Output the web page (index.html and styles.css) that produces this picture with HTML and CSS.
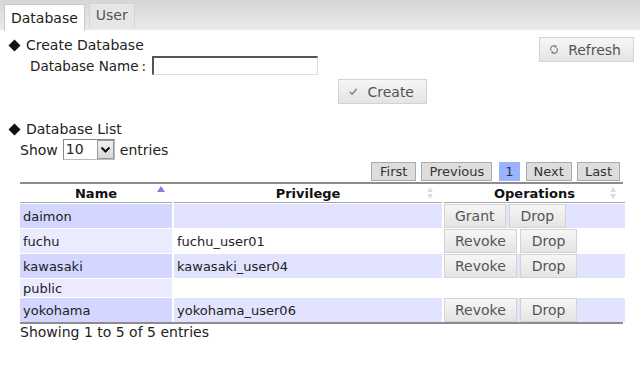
FILE: index.html
```html
<!DOCTYPE html>
<html>
<head>
<meta charset="utf-8">
<link rel="stylesheet" href="styles.css">
</head>
<body>
<div class="tabbar">
  <div class="tab active">Database</div>
  <div class="tab">User</div>
</div>
<div class="content">
  <div class="top">
    <div class="create">
      <div class="heading"><svg class="diamond" width="13" height="13" viewBox="0 0 13 13"><polygon points="6.5,0.5 12.5,6.5 6.5,12.5 0.5,6.5" fill="#111"/></svg>Create Database</div>
      <div class="namerow"><span class="label">Database Name</span><span class="colon">:</span><span class="input"></span></div>
      <div class="createrow"><span class="btn big create-btn"><svg class="ico" width="11" height="9" viewBox="0 0 11 9"><path d="M1 5 L4 8 L10 1" fill="none" stroke="#888" stroke-width="2"/></svg>Create</span></div>
    </div>
    <span class="btn big refresh"><svg class="ico" width="10" height="11" viewBox="0 0 10 11"><path d="M7.5 2.2 A3.6 3.6 0 0 0 1.8 7.2" fill="none" stroke="#888" stroke-width="1.6"/><path d="M2.5 8.8 A3.6 3.6 0 0 0 8.2 3.8" fill="none" stroke="#888" stroke-width="1.6"/><polygon points="5.5,0 9,1.5 6,4" fill="#888"/><polygon points="4.5,11 1,9.5 4,7" fill="#888"/></svg>Refresh</span>
  </div>
  <div class="heading list"><svg class="diamond" width="13" height="13" viewBox="0 0 13 13"><polygon points="6.5,0.5 12.5,6.5 6.5,12.5 0.5,6.5" fill="#111"/></svg>Database List</div>
  <div class="inner">
    <div class="showrow">Show <span class="select"><span class="val">10</span><span class="arrow"><svg width="11" height="8" viewBox="0 0 11 8"><path d="M1.5 1.5 L5.5 5.5 L9.5 1.5" fill="none" stroke="#111" stroke-width="2"/></svg></span></span> entries</div>
    <div class="pager">
      <span class="pbtn first">First</span><span class="pbtn">Previous</span><span class="pbtn cur">1</span><span class="pbtn">Next</span><span class="pbtn">Last</span>
    </div>
    <div class="tablewrap">
      <table class="dt">
        <colgroup><col class="c1"><col class="c2"><col class="c3"></colgroup>
        <thead>
          <tr>
            <th class="sorted">Name<span class="sort asc"></span></th>
            <th>Privilege<span class="sort both"></span></th>
            <th>Operations<span class="sort both"></span></th>
          </tr>
        </thead>
        <tbody>
          <tr class="odd"><td class="s1">daimon</td><td></td><td class="ops"><span class="btn">Grant</span><span class="btn drop">Drop</span></td></tr>
          <tr class="even"><td class="s1">fuchu</td><td>fuchu_user01</td><td class="ops"><span class="btn">Revoke</span><span class="btn drop">Drop</span></td></tr>
          <tr class="odd"><td class="s1">kawasaki</td><td>kawasaki_user04</td><td class="ops"><span class="btn">Revoke</span><span class="btn drop">Drop</span></td></tr>
          <tr class="even short"><td class="s1">public</td><td></td><td></td></tr>
          <tr class="odd"><td class="s1">yokohama</td><td>yokohama_user06</td><td class="ops"><span class="btn">Revoke</span><span class="btn drop">Drop</span></td></tr>
        </tbody>
      </table>
    </div>
    <div class="info">Showing 1 to 5 of 5 entries</div>
  </div>
</div>
</body>
</html>
```
FILE: styles.css
```css
* { box-sizing: border-box; }
body {
  margin: 0;
  font-family: "DejaVu Sans", Verdana, sans-serif;
  font-size: 14px;
  color: #222;
  background: #fff;
}
.tabbar {
  height: 31px;
  background: linear-gradient(#d6d6d6, #ebebeb);
  display: flex;
  align-items: flex-end;
  padding-left: 4px;
  gap: 4px;
  border-bottom: 1px solid #fff;
}
.tab {
  height: 25px;
  line-height: 23px;
  padding: 0 6px;
  background: #e6e6e6;
  border: 1px solid #d3d3d3;
  border-bottom: none;
  color: #555;
  margin-bottom: 2px;
}
.tab.active {
  height: 27px;
  padding: 0 6px;
  background: #fff;
  border-color: #c8c8c8;
  color: #212121;
  margin-bottom: -1px;
  line-height: 26px;
}
.content { padding: 0 8px; }
.top { display: flex; justify-content: space-between; align-items: flex-start; }
.heading {
  display: flex;
  align-items: center;
  height: 17px;
  line-height: 17px;
  margin-top: 6px;
}
.diamond { margin-right: 5px; }
.namerow {
  display: flex;
  align-items: center;
  margin-top: 2px;
  padding-left: 22px;
  height: 19px;
  font-size: 13.5px;
}
.colon { margin-left: 3px; margin-right: 6px; }
.input {
  width: 166px;
  height: 19px;
  border: 1px solid #ddd;
  border-top: 2px solid #555;
  border-left: 2px solid #555;
  background: #fff;
}
.createrow { margin-top: 4px; padding-left: 330px; }
.btn {
  display: inline-flex;
  align-items: center;
  justify-content: center;
  height: 24px;
  padding: 0 10px;
  border: 1px solid #d3d3d3;
  background: linear-gradient(#f6f6f6, #e4e4e4);
  color: #555;
  line-height: 16px;
}
.btn.drop { padding: 0 11px; }
.btn.big { height: 25px; padding: 0 12px 0 10px; }
.btn .ico { margin-right: 10px; }
.create-btn { width: 89px; }
.refresh { width: 95px; margin-top: 6px; margin-right: -2px; }
.heading.list { margin-top: 17px; }
.inner { padding-left: 12px; width: 615px; }
.showrow {
  display: flex;
  align-items: center;
  margin-top: 1px;
  height: 21px;
}
.select {
  display: inline-flex;
  width: 52px;
  height: 21px;
  margin: 0 5px 0 5px;
  border: 1px solid #888;
  border-right-color: #bbb;
  border-bottom-color: #bbb;
  background: #fff;
}
.select .val { flex: 1; padding-left: 2px; line-height: 19px; }
.select .arrow {
  width: 17px;
  border: 1px solid #999;
  background: linear-gradient(#f0f0f0, #d8d8d8);
  display: flex;
  align-items: center;
  justify-content: center;
}
.pager {
  display: flex;
  justify-content: flex-end;
  margin-top: 2px;
  padding-right: 3px;
  height: 19px;
  font-size: 13px;
}
.pbtn {
  height: 19px;
  line-height: 17px;
  padding: 0 7px;
  margin-left: 5px;
  border: 1px solid #aaa;
  background: #ddd;
  color: #333;
}
.pbtn.first { padding: 0 8px; }
.pbtn.cur {
  background: #99b3ff;
  border-color: #99b3ff;
  padding: 0 5px;
  margin-left: 7px;
  margin-right: 1px;
}
.tablewrap {
  margin-top: 1px;
  border-top: 2px solid #8c8c8c;
  border-bottom: 2px solid #8c8c8c;
  width: 603px;
}
.dt {
  border-collapse: separate;
  border-spacing: 2px 1px;
  margin: -1px -2px;
  width: 607px;
  table-layout: fixed;
  font-size: 13px;
}
.c1 { width: 152px; }
.c2 { width: 268px; }
.c3 { width: 181px; }
.dt th {
  position: relative;
  height: 19px;
  padding: 0;
  font-weight: bold;
  text-align: center;
  border-bottom: 1px solid #a8a8a8;
  line-height: 17px;
  color: #111;
}
.sort { position: absolute; top: 2px; right: 8px; width: 7px; height: 14px; }
.sort.asc::before {
  content: ""; position: absolute; top: 0; left: 0;
  border-left: 4px solid transparent; border-right: 4px solid transparent;
  border-bottom: 6px solid #7b82d8;
}
.sort.both::before, .sort.both::after {
  content: ""; position: absolute; left: 0;
  border-left: 3.5px solid transparent; border-right: 3.5px solid transparent;
}
.sort.both::before { top: 1px; border-bottom: 5px solid #ddd; }
.sort.both::after { top: 8px; border-top: 5px solid #ddd; }
.dt td {
  height: 24px;
  padding: 0 0 0 3px;
  line-height: 17px;
  white-space: nowrap;
}
.dt tr.short td { height: 18px; }
.dt tr.odd td { background: #e2e4ff; }
.dt tr.odd td.s1 { background: #d3d6ff; }
.dt tr.even td { background: #fff; }
.dt tr.even td.s1 { background: #eaebff; }
.dt td.ops { padding: 0; font-size: 14px; }
.dt td.ops .btn { margin-right: 3px; vertical-align: top; }
.info { line-height: 17px; margin-top: 0; }
```
